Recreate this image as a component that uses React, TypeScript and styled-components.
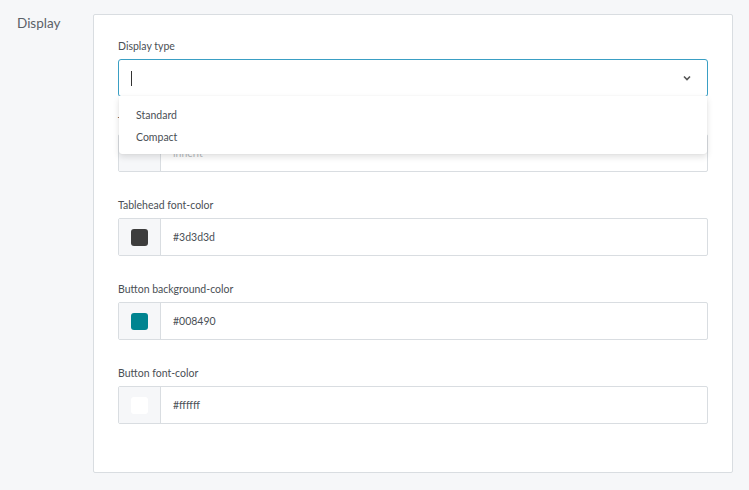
import styled, { createGlobalStyle } from 'styled-components';

const GlobalStyle = createGlobalStyle`
  body {
    margin: 0;
    background: #f6f7f9;
    font-family: Lato, "Liberation Sans", sans-serif;
  }
`;

type ColorField = { label: string; value: string; swatch: string; faded?: boolean };

const fields: ColorField[] = [
  { label: 'Tablehead background-color', value: 'inherit', swatch: '#f6f7f9', faded: true },
  { label: 'Tablehead font-color', value: '#3d3d3d', swatch: '#3d3d3d' },
  { label: 'Button background-color', value: '#008490', swatch: '#008490' },
  { label: 'Button font-color', value: '#ffffff', swatch: '#ffffff' },
];

export default function App() {
  return (
    <>
      <GlobalStyle />
      <Page>
        <SectionTitle>Display</SectionTitle>
        <Card>
          <SelectField>
            <Label>Display type</Label>
            <SelectBox>
              <Caret />
              <svg width='12' height='12' viewBox='0 0 12 12'>
                <path d='M3 4.5 L6 7.5 L9 4.5' fill='none' stroke='#555' strokeWidth='1.6' />
              </svg>
            </SelectBox>
            <Menu>
              <MenuItem>Standard</MenuItem>
              <MenuItem>Compact</MenuItem>
            </Menu>
          </SelectField>
          {fields.map((f) => (
            <Field key={f.label}>
              <Label>{f.label}</Label>
              <ColorInput>
                <SwatchCell>
                  <Swatch $color={f.swatch} />
                </SwatchCell>
                <Value $faded={f.faded}>{f.value}</Value>
              </ColorInput>
            </Field>
          ))}
        </Card>
      </Page>
    </>
  );
}

const Page = styled.div`
  display: flex;
  padding: 14px 16px 16px 17px;
  gap: 32px;
`;

const SectionTitle = styled.div`
  width: 44px;
  padding-top: 1px;
  font-size: 13.5px;
  color: #5b6168;
`;

const Card = styled.div`
  flex: 1;
  display: flex;
  flex-direction: column;
  gap: 26px;
  background: #fff;
  border: 1px solid #d9dde1;
  border-radius: 2px;
  padding: 24px 24px 48px 24px;
`;

const Field = styled.div`
  display: flex;
  flex-direction: column;
  gap: 6px;
`;

const SelectField = styled(Field)`
  position: relative;
  margin-bottom: -9px;
`;

const Label = styled.div`
  font-size: 10.5px;
  line-height: 14px;
  color: #4a4f55;
`;

const SelectBox = styled.div`
  height: 36px;
  border: 1px solid #3a9fc4;
  border-radius: 3px;
  display: flex;
  align-items: center;
  justify-content: space-between;
  padding: 0 14px 0 12px;
`;

const Caret = styled.span`
  width: 1px;
  height: 15px;
  background: #333;
`;

const Menu = styled.div`
  position: absolute;
  top: 57px;
  left: 1px;
  right: 1px;
  background: #fff;
  border-radius: 0 0 3px 3px;
  box-shadow: 0 3px 6px rgba(0, 0, 0, 0.12), 0 0 1px rgba(0, 0, 0, 0.15);
  padding: 8px 0 6px;
  z-index: 2;
`;

const MenuItem = styled.div`
  font-size: 10.5px;
  line-height: 22px;
  padding-left: 17px;
  color: #4a4f55;
`;

const ColorInput = styled.div`
  height: 36px;
  display: flex;
  border: 1px solid #d9dde1;
  border-radius: 2px;
`;

const SwatchCell = styled.div`
  width: 41px;
  display: flex;
  align-items: center;
  justify-content: center;
  background: #f6f7f9;
  border-right: 1px solid #d9dde1;
`;

const Swatch = styled.span<{ $color: string }>`
  width: 17px;
  height: 17px;
  border-radius: 3px;
  background: ${(p) => p.$color};
`;

const Value = styled.div<{ $faded?: boolean }>`
  display: flex;
  align-items: center;
  padding-left: 12px;
  font-size: 10.5px;
  color: ${(p) => (p.$faded ? '#b8bcc0' : '#4a4f55')};
`;
